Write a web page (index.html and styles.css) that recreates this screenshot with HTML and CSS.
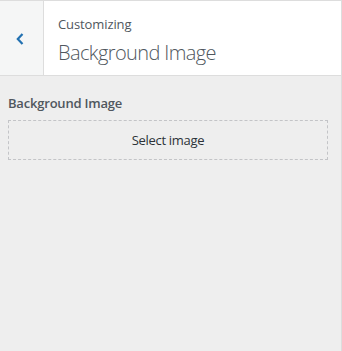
FILE: index.html
```html
<!DOCTYPE html>
<html lang="en">
<head>
    <meta charset="UTF-8">
    <title>Customizing Background Image</title>
    <link rel="stylesheet" href="styles.css">
</head>
<body>
    <div class="panel">
        <header class="section-title">
            <button class="back-btn" aria-label="Back">
                <svg width="8" height="12" viewBox="0 0 8 12">
                    <path d="M6.5 1 L1.8 6 L6.5 11" fill="none" stroke="#2271b1" stroke-width="2.2"/>
                </svg>
            </button>
            <div class="title-text">
                <span class="action">Customizing</span>
                <h3>Background Image</h3>
            </div>
        </header>

        <section class="control">
            <span class="control-label">Background Image</span>
            <button class="upload-btn">Select image</button>
        </section>
    </div>
</body>
</html>
```

FILE: styles.css
```css
* {
    margin: 0;
    padding: 0;
    box-sizing: border-box;
}

body {
    font-family: 'Open Sans', 'Noto Sans', sans-serif;
    font-size: 13px;
    color: #50575e;
    background-color: #eeeeee;
}

.panel {
    width: 342px;
    height: 351px;
    border-top: 1px solid #dddddd;
    border-right: 1px solid #dddddd;
    background-color: #eeeeee;
}

.section-title {
    display: flex;
    height: 75px;
    background-color: #ffffff;
    border-bottom: 1px solid #dddddd;
}

.back-btn {
    width: 44px;
    background-color: #f5f6f6;
    border: none;
    border-right: 1px solid #dddddd;
    display: flex;
    align-items: center;
    padding-left: 16px;
    padding-top: 2px;
}

.title-text {
    padding: 13px 0 0 14px;
}

.action {
    display: block;
    font-size: 13px;
    line-height: 20px;
    letter-spacing: -0.1px;
    color: #50575e;
}

.title-text h3 {
    font-size: 20px;
    font-weight: 300;
    line-height: 30px;
    letter-spacing: -0.6px;
    margin-top: 4px;
    color: #50575e;
}

.control {
    padding: 17px 13px 0 8px;
}

.control-label {
    display: block;
    font-weight: 600;
    font-size: 13px;
    line-height: 20px;
    letter-spacing: -0.2px;
    margin-bottom: 7px;
}

.upload-btn {
    display: block;
    width: 100%;
    height: 40px;
    background: none;
    border: 1px dashed #c3c4c7;
    font-family: inherit;
    font-size: 13px;
    letter-spacing: -0.3px;
    color: #2c3338;
}
```
